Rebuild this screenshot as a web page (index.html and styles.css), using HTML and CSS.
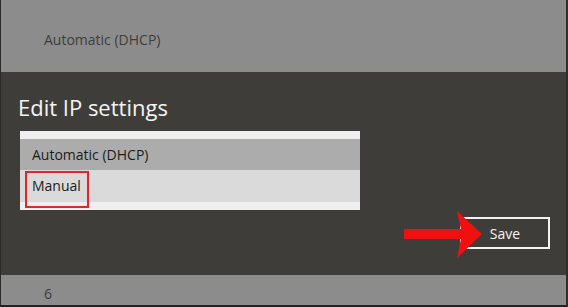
FILE: index.html
```html
<!DOCTYPE html>
<html lang="en">
<head>
    <meta charset="UTF-8">
    <title>Edit IP settings</title>
    <link rel="stylesheet" href="styles.css">
</head>
<body>
    <div class="screen">
        <div class="top-band">Automatic (DHCP)</div>

        <div class="dialog">
            <h1>Edit IP settings</h1>

            <div class="listbox">
                <div class="list-pad"></div>
                <div class="option selected">Automatic (DHCP)</div>
                <div class="option">
                    <span class="mark">Manual</span>
                </div>
                <div class="list-pad"></div>
            </div>

            <div class="actions">
                <button class="save-btn">Save</button>
                <!-- red arrow pointing at Save -->
                <svg class="arrow" width="90" height="48" viewBox="0 0 90 48">
                    <rect x="0" y="18" width="58" height="10" fill="#f01010"/>
                    <polygon points="53,0 78,23 53,47 58,23" fill="#f01010"/>
                </svg>
            </div>
        </div>

        <div class="bottom-band">6</div>
    </div>
</body>
</html>
```

FILE: styles.css
```css
body {
    margin: 0;
    font-family: 'Open Sans', 'Noto Sans', sans-serif;
    background-color: #1e1e1e;
}

.screen {
    width: 565px;
    height: 305px;
    border-left: 1px solid #2a2a2a;
    border-right: 2px solid #2e2e2c;
    border-bottom: 2px solid #222;
    display: flex;
    flex-direction: column;
    overflow: hidden;
}

.top-band {
    height: 72px;
    background-color: #8c8c8c;
    color: #3e3e3e;
    font-size: 14px;
    padding-left: 43px;
    line-height: 80px;
    box-sizing: border-box;
}

.dialog {
    flex: 1;
    background-color: #3f3d39;
    padding: 20px 16px 0 19px;
    position: relative;
}

h1 {
    margin: 0 0 0 -2px;
    color: #f4f4f4;
    font-weight: normal;
    font-size: 22px;
    line-height: 30px;
}

.listbox {
    width: 340px;
    margin-top: 9px;
    background-color: #efefef;
}

.list-pad {
    height: 8px;
}

.option {
    height: 32px;
    padding-left: 12px;
    font-size: 14px;
    color: #1c1c1c;
    line-height: 32px;
    background-color: #dadada;
    position: relative;
}

.option.selected {
    height: 31px;
    line-height: 31px;
    background-color: #acacac;
}

.mark::after {
    content: "";
    position: absolute;
    left: 5px;
    top: 1px;
    width: 60px;
    height: 33px;
    border: 2px solid #e2262b;
}

.actions {
    display: flex;
    justify-content: flex-end;
    margin-top: 7px;
    position: relative;
}

.save-btn {
    width: 90px;
    height: 32px;
    background-color: transparent;
    border: 2px solid #f2f2f2;
    color: #f4f4f4;
    font-family: inherit;
    font-size: 14px;
    padding: 0;
}

.arrow {
    position: absolute;
    left: 384px;
    top: -6px;
}

.bottom-band {
    height: 30px;
    background-color: #8c8c8c;
    color: #3e3e3e;
    font-size: 14px;
    padding-left: 43px;
    line-height: 38px;
}
```
